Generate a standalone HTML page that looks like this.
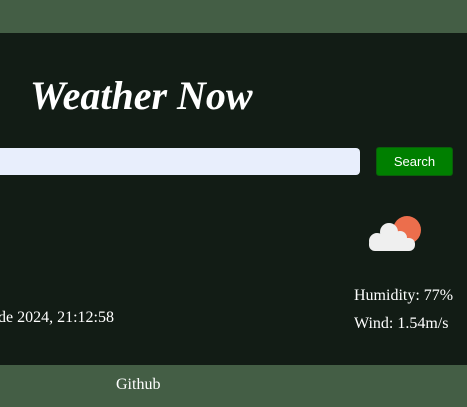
<!DOCTYPE html>
<html><head><style>
body{margin:0;width:467px;height:407px;overflow:hidden;background:#121c15;font-family:"Liberation Serif",serif;color:#fff;position:relative}
.bar{position:absolute;left:0;width:467px;background:#445e45}
.t{position:absolute;white-space:nowrap}
</style></head><body>
<div class="bar" style="top:0;height:33px"></div>
<div class="bar" style="top:365px;height:42px"></div>
<div class="t" style="left:30px;top:72px;font:italic bold 40px 'Liberation Serif',serif">Weather Now</div>
<div style="position:absolute;left:-10px;top:148px;width:370px;height:27px;background:#e8eefc;border-radius:4px"></div>
<div style="position:absolute;left:376px;top:147px;width:75px;height:27px;background:#007f00;border:1px solid #0a5e0a;border-radius:3px;color:#fff;font:13px 'Liberation Sans',sans-serif;text-align:center;line-height:27px">Search</div>
<svg style="position:absolute;left:366px;top:214px" width="56" height="40" viewBox="0 0 56 40">
<circle cx="41" cy="16" r="14" fill="#ec6e4c"/>
<g fill="#efefef">
<circle cx="23" cy="18" r="9"/><circle cx="34" cy="24" r="7"/><circle cx="11" cy="27" r="8"/>
<rect x="3" y="24" width="46" height="13" rx="6"/>
</g></svg>
<div class="t" style="left:354px;top:287px;font-size:16px">Humidity: 77%</div>
<div class="t" style="left:354px;top:315px;font-size:16px">Wind: 1.54m/s</div>
<div class="t" style="left:-2px;top:309px;font-size:16px">de 2024, 21:12:58</div>
<div class="t" style="left:116px;top:376px;font-size:16px">Github</div>
</body></html>
